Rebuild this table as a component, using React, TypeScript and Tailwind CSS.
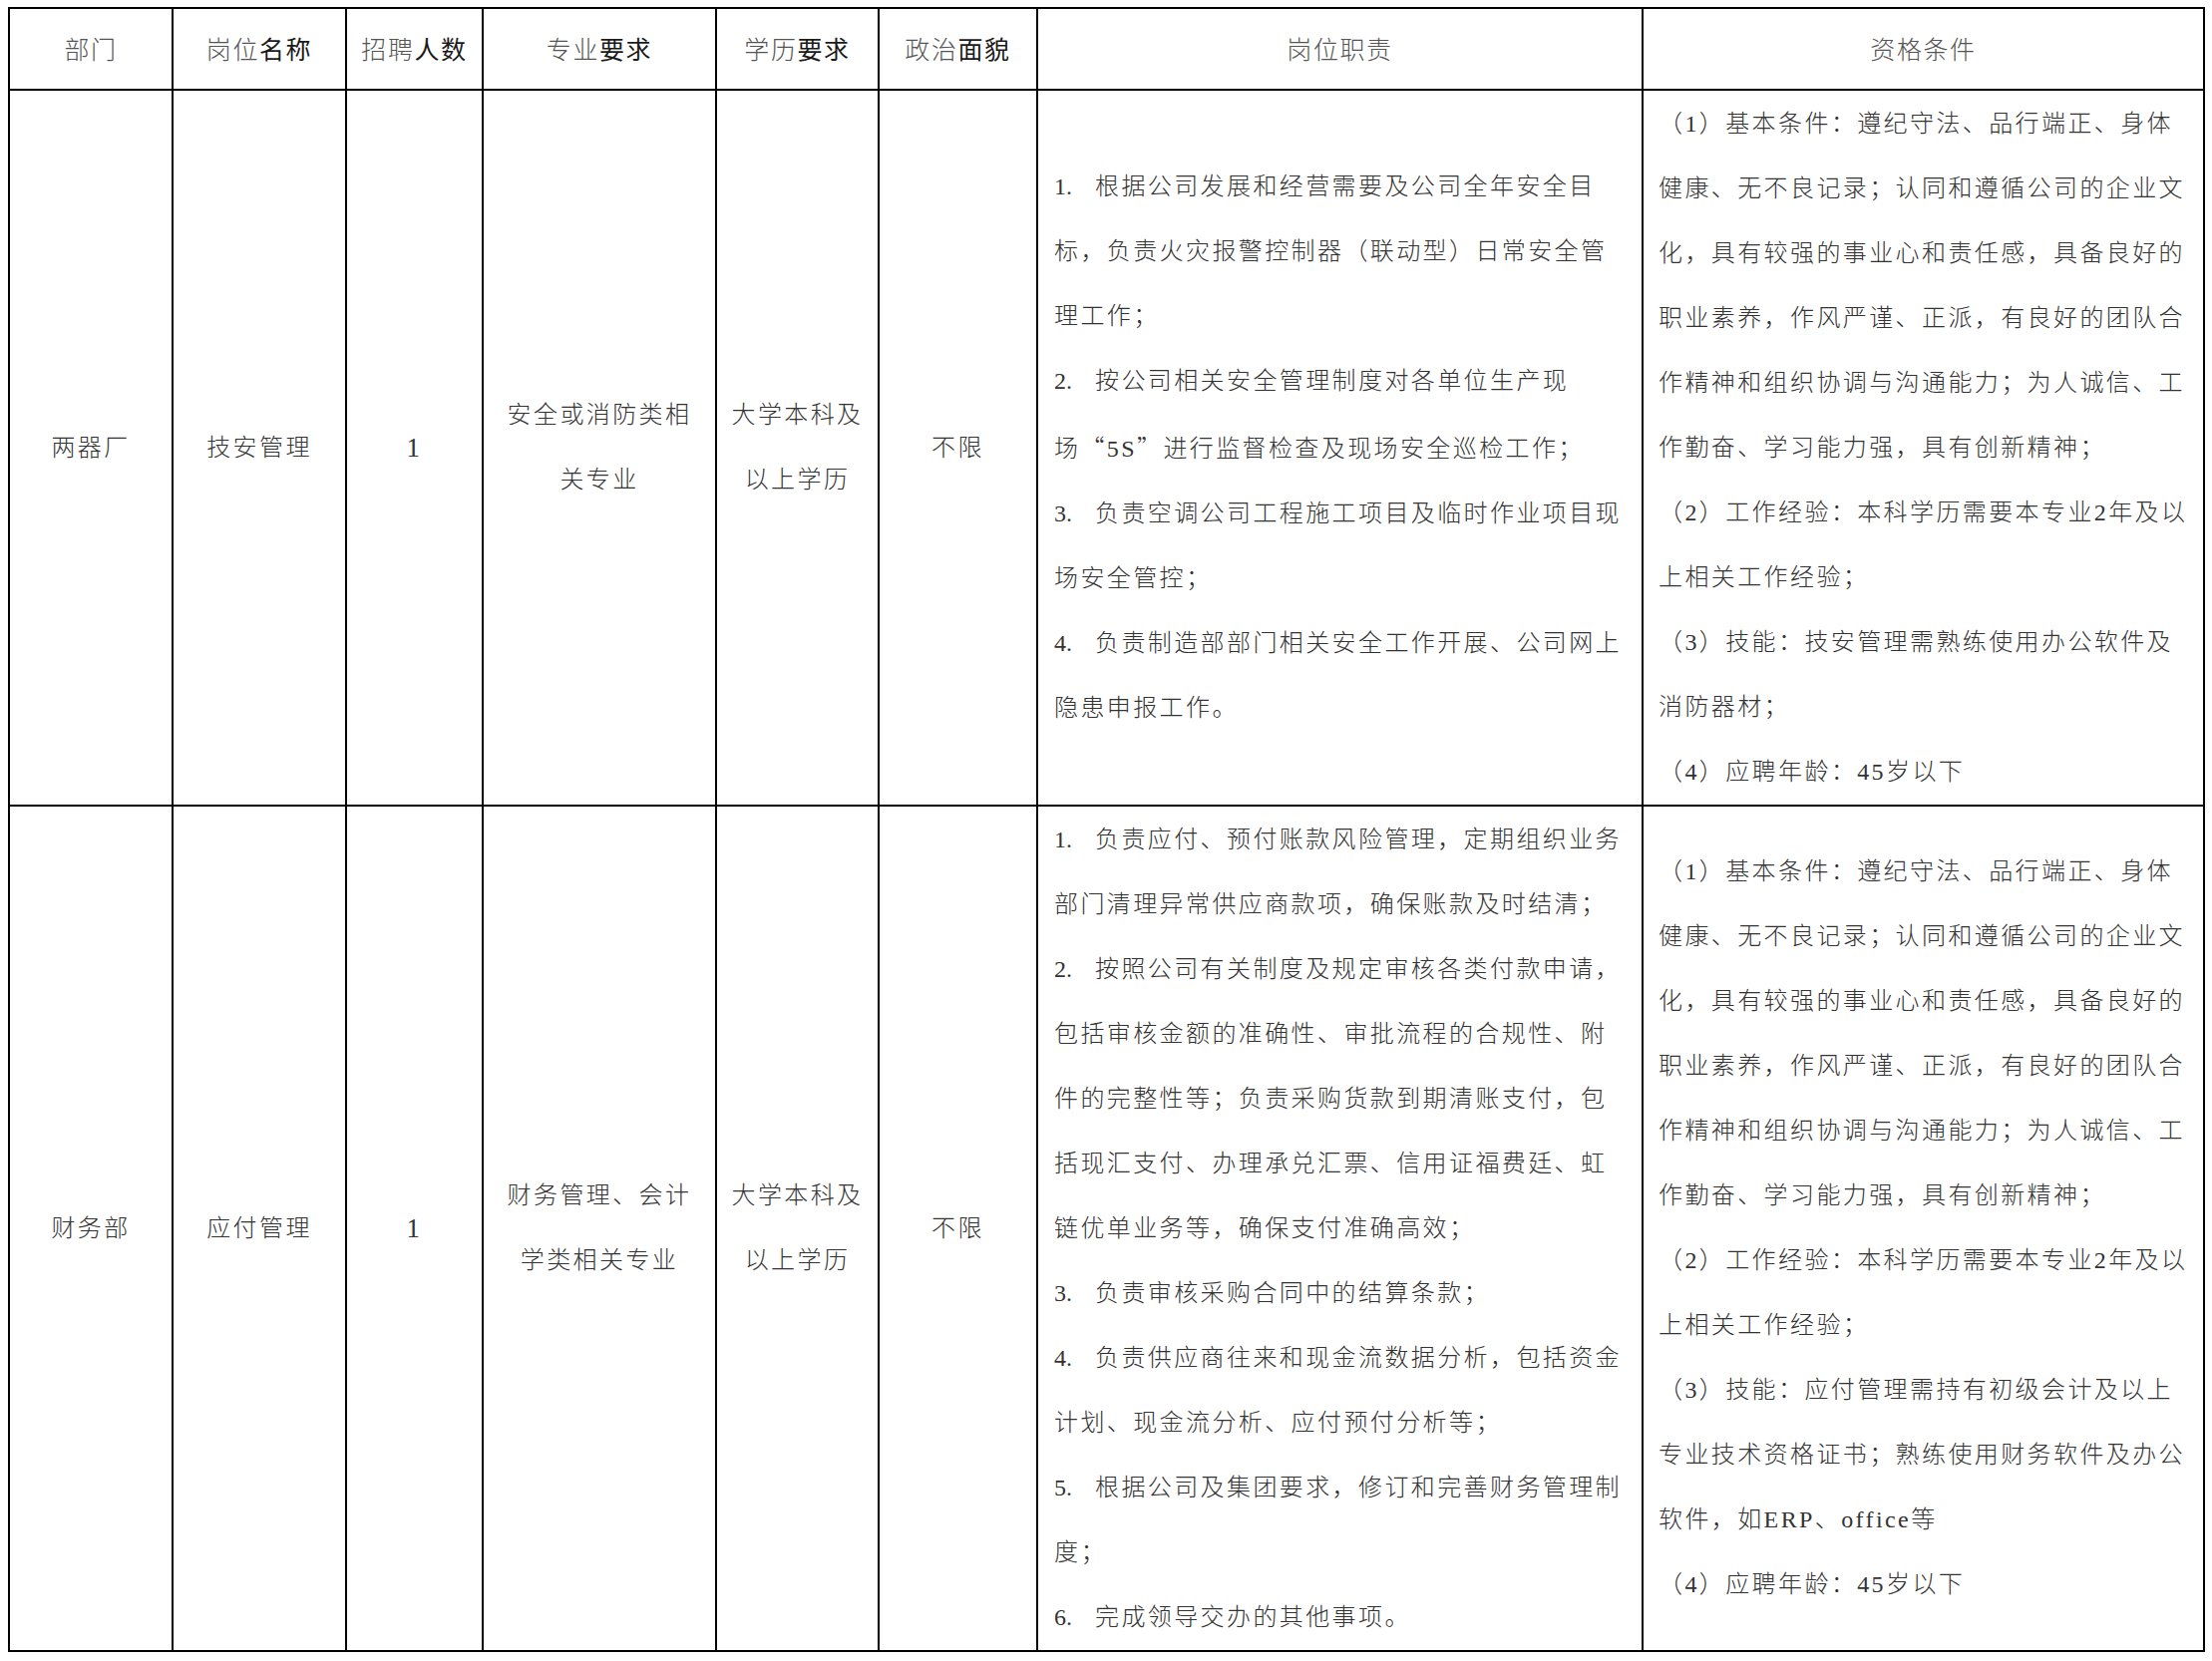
import React from 'react';

interface Posting {
  dept: string;
  title: string;
  count: string;
  major: string[];
  edu: string[];
  politics: string;
  duties: React.ReactNode[];
  quals: string[];
  height: string;
}

const cjk = "font-[family-name:'Noto_Sans_CJK_SC',sans-serif]";

// a numbered duty line: fixed-width "1." prefix then text
const Num: React.FC<{ n: string; children: React.ReactNode }> = ({ n, children }) => (
  <>
    <span className="inline-block w-[41px] tracking-normal">{n}</span>
    {children}
  </>
);

const postings: Posting[] = [
  {
    dept: "两器厂",
    title: "技安管理",
    count: "1",
    major: ["安全或消防类相", "关专业"],
    edu: ["大学本科及", "以上学历"],
    politics: "不限",
    height: "h-[718px]",
    duties: [
      <Num n="1.">根据公司发展和经营需要及公司全年安全目</Num>,
      "标，负责火灾报警控制器（联动型）日常安全管",
      "理工作；",
      <Num n="2.">按公司相关安全管理制度对各单位生产现</Num>,
      <>场<span className={cjk}>“</span>5S<span className={cjk}>”</span>进行监督检查及现场安全巡检工作；</>,
      <Num n="3.">负责空调公司工程施工项目及临时作业项目现</Num>,
      "场安全管控；",
      <Num n="4.">负责制造部部门相关安全工作开展、公司网上</Num>,
      "隐患申报工作。"
    ],
    quals: [
      "（1）基本条件：遵纪守法、品行端正、身体",
      "健康、无不良记录；认同和遵循公司的企业文",
      "化，具有较强的事业心和责任感，具备良好的",
      "职业素养，作风严谨、正派，有良好的团队合",
      "作精神和组织协调与沟通能力；为人诚信、工",
      "作勤奋、学习能力强，具有创新精神；",
      "（2）工作经验：本科学历需要本专业2年及以",
      "上相关工作经验；",
      "（3）技能：技安管理需熟练使用办公软件及",
      "消防器材；",
      "（4）应聘年龄：45岁以下"
    ]
  },
  {
    dept: "财务部",
    title: "应付管理",
    count: "1",
    major: ["财务管理、会计", "学类相关专业"],
    edu: ["大学本科及", "以上学历"],
    politics: "不限",
    height: "h-[848px]",
    duties: [
      <Num n="1.">负责应付、预付账款风险管理，定期组织业务</Num>,
      "部门清理异常供应商款项，确保账款及时结清；",
      <Num n="2.">按照公司有关制度及规定审核各类付款申请，</Num>,
      "包括审核金额的准确性、审批流程的合规性、附",
      "件的完整性等；负责采购货款到期清账支付，包",
      "括现汇支付、办理承兑汇票、信用证福费廷、虹",
      "链优单业务等，确保支付准确高效；",
      <Num n="3.">负责审核采购合同中的结算条款；</Num>,
      <Num n="4.">负责供应商往来和现金流数据分析，包括资金</Num>,
      "计划、现金流分析、应付预付分析等；",
      <Num n="5.">根据公司及集团要求，修订和完善财务管理制</Num>,
      "度；",
      <Num n="6.">完成领导交办的其他事项。</Num>
    ],
    quals: [
      "（1）基本条件：遵纪守法、品行端正、身体",
      "健康、无不良记录；认同和遵循公司的企业文",
      "化，具有较强的事业心和责任感，具备良好的",
      "职业素养，作风严谨、正派，有良好的团队合",
      "作精神和组织协调与沟通能力；为人诚信、工",
      "作勤奋、学习能力强，具有创新精神；",
      "（2）工作经验：本科学历需要本专业2年及以",
      "上相关工作经验；",
      "（3）技能：应付管理需持有初级会计及以上",
      "专业技术资格证书；熟练使用财务软件及办公",
      "软件，如ERP、office等",
      "（4）应聘年龄：45岁以下"
    ]
  }
];

// header labels: [thin part, darker part]
const headers: [string, string][] = [
  ["部门", ""],
  ["岗位", "名称"],
  ["招聘", "人数"],
  ["专业", "要求"],
  ["学历", "要求"],
  ["政治", "面貌"],
  ["岗位职责", ""],
  ["资格条件", ""]
];

const cell = "border-2 border-black p-0 align-middle text-center";

const Lines: React.FC<{ lines: React.ReactNode[] }> = ({ lines }) => (
  <div className="leading-[65px]">
    {lines.map((l, i) => (
      <div key={i} className="whitespace-nowrap">{l}</div>
    ))}
  </div>
);

const App: React.FC = () => {
  return (
    <div className="min-h-screen bg-white font-[family-name:'Liberation_Serif','Noto_Sans_CJK_SC',serif] text-[24px] tracking-[2.4px] font-light text-[#333333]">
      <table className="ml-[8px] mt-[7px] w-[2201px] table-fixed border-collapse">
        <colgroup>
          <col className="w-[164px]" />
          <col className="w-[174px]" />
          <col className="w-[137px]" />
          <col className="w-[234px]" />
          <col className="w-[163px]" />
          <col className="w-[159px]" />
          <col className="w-[607px]" />
          <col className="w-[563px]" />
        </colgroup>
        <thead>
          <tr className="h-[82px]">
            {headers.map(([thin, dark], i) => (
              <th key={i} className={`${cell} ${cjk} text-[25px] tracking-[1.6px]`}>
                <span className="font-light text-[#555555]">{thin}</span>
                {dark && <span className="font-normal text-[#1a1a1a]">{dark}</span>}
              </th>
            ))}
          </tr>
        </thead>
        <tbody>
          {postings.map((p, idx) => (
            <tr key={idx} className={p.height}>
              <td className={cell}>{p.dept}</td>
              <td className={cell}>{p.title}</td>
              <td className={`${cell} text-[27px]`}>{p.count}</td>
              <td className={cell}><Lines lines={p.major} /></td>
              <td className={cell}><Lines lines={p.edu} /></td>
              <td className={cell}>{p.politics}</td>
              <td className={`${cell} text-left pl-[16px]`}>
                <Lines lines={p.duties} />
              </td>
              <td className={`${cell} text-left pl-[15px]`}>
                <Lines lines={p.quals} />
              </td>
            </tr>
          ))}
        </tbody>
      </table>
    </div>
  );
};

export default App;
